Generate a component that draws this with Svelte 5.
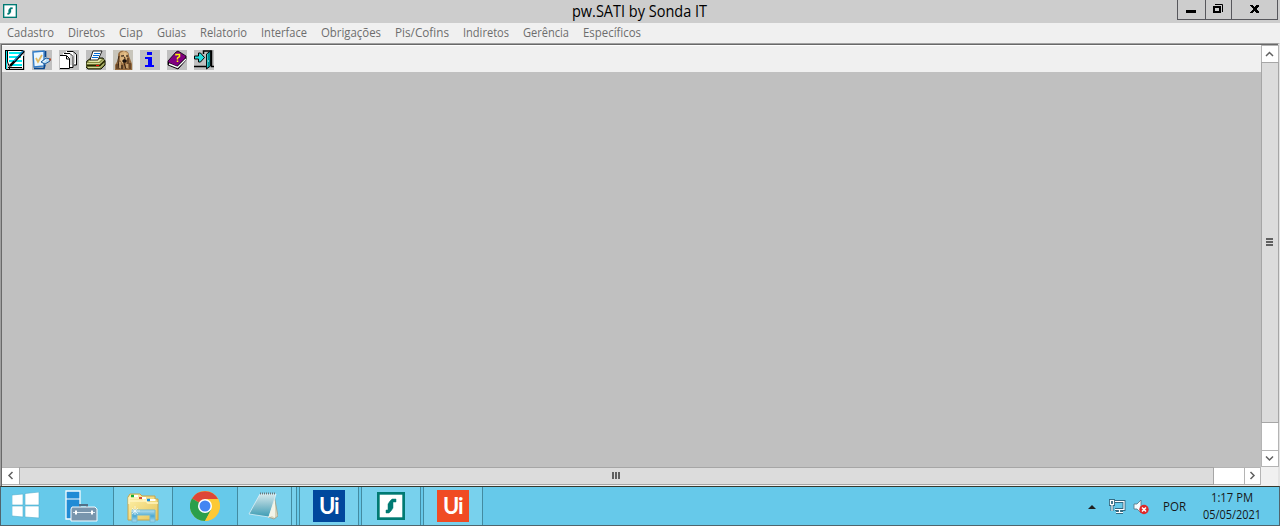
<script>
  const menu = [
    ['Cadastro', 47], ['Diretos', 37], ['Ciap', 24], ['Guias', 29], ['Relatorio', 47], ['Interface', 46],
    ['Obrigações', 60], ['Pis/Cofins', 54], ['Indiretos', 46], ['Gerência', 46], ['Específicos', 58]
  ];
</script>

{#snippet label(text, width, size, color)}
  <svg class="label" {width} height="20"><text x="0" y="14" font-size={size} fill={color} textLength={width} lengthAdjust="spacingAndGlyphs">{text}</text></svg>
{/snippet}

{#snippet sonda(size)}
  <svg width={size} height={size} viewBox="0 0 28 28">
    <rect width="28" height="28" fill="#007a73" /><rect x="2.700" y="2.700" width="22.600" height="22.600" fill="#fff" />
    <path d="M19 7v3h-3v6l-2 3-2 2H9v-3h2v-6l2-3 2-2z" fill="#007a73" stroke="#007a73" stroke-width=".5" />
  </svg>
{/snippet}

<div class="screen">
  <header>
    <div class="appicon">{@render sonda(14)}</div>
    <div class="title">{@render label('pw.SATI by Sonda IT', 135, 16, '#000')}</div>
    <div class="controls">
      <span class="min"><svg width="27" height="19"><path d="M8 10h10v3H8z" /></svg></span>
      <span class="max"><svg width="25" height="19" fill="none" stroke="#000"><path d="M9 4.500h7.500V12" stroke-width="1" /><path d="M8 7h6v5H8z" stroke-width="2" /></svg></span>
      <span class="close"><svg width="45" height="19" shape-rendering="crispEdges"><path d="M18 5h3l1.500 2L24 5h3v1l-3 3 3 3v1h-3l-1.500-2-1.500 2h-3v-1l3-3-3-3z" /></svg></span>
    </div>
  </header>
  <nav>{#each menu as [name, width]}{@render label(name, width, 12, '#6d6d6d')}{/each}</nav>
  <main>
    <section>
      <div class="tools">
        <svg viewBox="0 0 20 20"><path fill="#c0c0c0" d="M0 0h20v20H0z" /><path fill="#fff" d="M2 1h16v17H3z" /><path stroke="#00eaf2" stroke-width="2" d="M4 3h13M4 7h12M4 11h13M5 15h12" /><path d="M.500 0v19" stroke="#000" /><path d="M1.500 1v18" stroke="#00e0e8" /><path fill="none" stroke="#000" d="M2.500 1v11l2 5v2M0 .500h18M18.500 6v13" /><path d="M3 17.500h14M1 19.500h18" stroke="#000" /><path stroke="#000" stroke-width="2.500" d="M19 1 9 12l-4 4" /><path stroke="#1685c9" stroke-width="1.200" d="M18 1 9 11" /></svg>
        <svg viewBox="0 0 20 20"><path fill="#c0c0c0" d="M0 0h20v20H0z" /><path d="m1 2 11-1v15L2 17z" fill="#eaf7ff" stroke="#2f7cca" stroke-width="1.300" /><path d="M2 18.500h10l1-4M13.500 1v6" fill="none" stroke="#07458d" stroke-width="1.700" /><path d="m4 8 2 4 4-7" fill="none" stroke="#e1b962" stroke-width="1.700" /><path d="m9 12 5-4 4 1v2l-5 3z" fill="#b7dcf4" stroke="#1b5c9e" /><path d="m11 12 3-2" stroke="#fff" /><path d="M17 9.500h2" stroke="#b34b28" stroke-width="2" /></svg>
        <svg viewBox="0 0 20 20"><path fill="#c0c0c0" d="M0 0h20v20H0z" /><g fill="#fff"><path d="M7 1h7l3 3v11H7z" /><path d="M4 3h7l3 3v11H4z" /><path d="M1 5h7l3 3v11H1z" /></g><g fill="none" stroke="#000"><path d="M8 1.500h6l3.500 3V15H15" /><path d="M5 3.500h6l3 3v11h-3" /><path d="M1 5.500h6.500l3 3v10H1" /><path d="M7.500 6v3h3" /></g><path d="M12 5v10M15 3v10" stroke="#aaa" /></svg>
        <svg viewBox="0 0 20 20"><path fill="#c0c0c0" d="M0 0h20v20H0z" /><path d="m1 11 4-3h12l2 3v4l-4 4H2l-2-2v-4z" fill="#858a40" stroke="#151809" /><path d="m2 12 4-3h10l-3 3z" fill="#e0e5a5" /><path d="m7 1 9 0-4 9H4z" fill="#fff" stroke="#111" stroke-width=".9" /><path d="M8 3.500h6M7 5.500h6M6 7.500h6" stroke="#006ad5" /><path d="M1 13.500h13l4-4M2 17.500h12l4-4" fill="none" stroke="#d4d99a" /><path d="M1 15.500h13l5-5" fill="none" stroke="#242600" stroke-width="1.300" /><path d="M10 15.500h3" stroke="#f00" /></svg>
        <svg viewBox="0 0 20 20"><path fill="#c8c5bb" d="M0 0h20v20H0z" /><path d="M5 5c0-3 3-5 6-4 4 0 5 2 5 5l3 8v6H2v-5l3-5z" fill="#976d41" /><path d="m7 3 4-2 4 2-1 6-4 5-3-4z" fill="#d9b27b" /><path d="M6 6 5 10l1 9M10 5l2 3-1 5 2 6M15 8v6M4 14v5M17 13v6" fill="none" stroke="#3a2413" /><path d="M8 6h2M13 6h2M10 10h3v2h-3zM9 15v4" stroke="#100b08" fill="#2c1a10" /><path d="M7 12v6M14 14v4M12 3v4" stroke="#f0d09a" /></svg>
        <svg viewBox="0 0 20 20"><path fill="#c0c0c0" d="M0 0h20v20H0z" /><path d="M7 2h5v3H7zM5 7h7v8h2v2H5v-2h3V9H5z" fill="#00f" /></svg>
        <svg viewBox="0 0 20 20"><path fill="#c0c0c0" d="M0 0h20v20H0z" /><path d="m1 11 8-9 2-1 8 5v4l-8 9-10-4z" fill="#800080" stroke="#000" stroke-width=".8" /><path d="m1 12 9 4 9-9v3l-8 9-10-4z" fill="#000" /><path d="m2 14 8.500 3.500L19 9" fill="none" stroke="#fff" stroke-width="1.400" /><path d="M9 5.500V4.500h3.500v2L10.500 8v1.500m0 1v1.500" fill="none" stroke="#ff0" stroke-width="1.500" /></svg>
        <svg viewBox="0 0 20 20"><path fill="#c0c0c0" d="M0 0h20v20H0z" /><path d="M9.500 4V1h8v15.500H20M0 16.500h12" fill="none" stroke="#000" stroke-width="1.500" /><path d="m12.500 4 4-3v15l-4 3z" fill="#008d91" stroke="#000" stroke-width=".9" /><path d="M13.500 4v13" stroke="#4dd" stroke-width=".7" /><path d="M.500 6h4V3h2l4 4.500-4 4.500h-2V9h-4z" fill="#26dede" stroke="#000" /><path d="M14 11h1" stroke="#fff" /></svg>
      </div>
      <div class="canvas"></div>
    </section>
    <aside>
      <div class="up"><svg viewBox="0 0 16 15"><path d="m4 10 3.500-3.500L11 10" /></svg></div>
      <div class="vthumb"><i></i><i></i><i></i></div>
      <div class="vtrack"></div>
      <div class="down"><svg viewBox="0 0 16 15"><path d="m4 5.500 3.500 3.500L11 5.500" /></svg></div>
    </aside>
    <div class="horizontal">
      <div class="left"><svg viewBox="0 0 16 15"><path d="M10.500 4 7 7.500l3.500 3.500" /></svg></div>
      <div class="hthumb"><i></i><i></i><i></i></div>
      <div class="htrack"></div>
      <div class="right"><svg viewBox="0 0 16 15"><path d="M5.500 4 9 7.500 5.500 11" /></svg></div>
    </div>
    <div class="corner"></div>
  </main>
  <footer>
    <div class="start"><svg width="28" height="27"><path d="m0 3 11-1v11H0zM13 1.500 27 0v13H13zM0 14h11v11L0 24zM13 14h14v12l-14-1z" fill="#fff" stroke="#51afcc" stroke-width=".6" /></svg></div>
    <div class="server"><svg width="33" height="33"><path d="M1 1h14v28H1z" fill="#218bd5" stroke="#f4fcff" stroke-width="1.300" /><path d="M1 9h14" stroke="#fff" /><path d="M15 17v-2h7v2" fill="none" stroke="#526f87" stroke-width="2" /><path d="M7 17h23l2 2v12H6V19z" fill="#7895ad" stroke="#f5fcff" /><path d="M8 22.500h22" stroke="#dfebf3" /><path d="M11 20.500v4M27 20.500v4" stroke="#fff" stroke-width="2" /></svg></div>
    <div class="task folder"><svg width="34" height="33"><defs><linearGradient id="folder" x2="1" y2="1"><stop stop-color="#fff3ac" /><stop offset="1" stop-color="#e6c55b" /></linearGradient><linearGradient id="stand" x2="0" y2="1"><stop stop-color="#b8e3f1" /><stop offset=".5" stop-color="#4ba8d2" /><stop offset="1" stop-color="#b0dff0" /></linearGradient></defs><path d="M1 27V4l2-3h10l2 2h13v3h3v21z" fill="url(#folder)" stroke="#c9a448" /><path d="M2 9V5h13l2 2h12M2 11V8h17l2 2h10" fill="none" stroke="#fff5c0" stroke-width="1.500" /><path d="M4 3h3" stroke="#18ae34" stroke-width="2.500" /><path d="M12 5h3" stroke="#d64f35" stroke-width="2" /><path d="M20 7h3" stroke="#168ddf" stroke-width="2.500" /><path d="M7 3h4M15 5h4M23 7h5" stroke="#fff" stroke-width="2" /><path d="M5 29V17h23v12h-5v-7H10v7z" fill="url(#stand)" stroke="#70b9d5" /><path d="M8 13v9M4 18h9M5 15l6 6M11 15l-6 6" stroke="#fff" stroke-width=".6" /></svg></div>
    <div class="chrome"><svg width="30" height="30" viewBox="0 0 30 30"><circle cx="15" cy="15" r="15" fill="#fcc934" /><path d="M15 15 2 7.500A15 15 0 0 1 28 8H15z" fill="#dd4638" /><path d="M15 15 2 7.500A15 15 0 0 0 15 30l6-11z" fill="#2b9f4b" /><path d="M15 8h13A15 15 0 0 1 15 30l6-11z" fill="#fcc934" /><circle cx="15" cy="15" r="7" fill="#fff" /><circle cx="15" cy="15" r="5.500" fill="#4385f2" /></svg></div>
    <div class="task notepad"><svg width="30" height="32"><defs><linearGradient id="page" x2="0" y2="1"><stop stop-color="#d5e9ed" /><stop offset=".5" stop-color="#8ac1cf" /><stop offset="1" stop-color="#3b9cb4" /></linearGradient></defs><path d="m26 4 4 21-4 3-6-2z" fill="#d7d5bc" stroke="#9c967c" stroke-width=".7" /><path d="M12 3h16l-7 23-20-3z" fill="url(#page)" stroke="#edf7fa" stroke-width=".7" /><path d="M12 2.500h16" stroke="#68777b" stroke-width="2" stroke-dasharray="1 1" /><path d="m27 8-7 19 4-2 3 2z" fill="#f2f5e9" /></svg></div>
    <div class="stack"></div>
    <div class="task ui"><svg width="32" height="32"><path fill="#00489d" d="M0 0h32v32H0z" /><text x="6" y="24" textLength="20.500">Ui</text></svg></div>
    <div class="task s">{@render sonda(28)}</div>
    <div class="task orange"><svg width="32" height="32"><path fill="#f04b23" d="M0 0h32v32H0z" /><text x="6" y="24" textLength="20.500">Ui</text></svg></div>
    <div class="tray">
      <svg class="arrow" width="8" height="5"><path d="m0 4 4-4 4 4z" fill="#202020" /></svg>
      <svg class="network" width="17" height="16" fill="none"><path d="M6 2.500h9v8H6M10.500 11v2.500M7 13.500h7M1.500 1.500h3v4h-3zM3 6v6" stroke="#346a82" stroke-width="3" /><path d="M6 2.500h9v8H6M10.500 11v2.500M7 13.500h7M1.500 1.500h3v4h-3zM3 6v6" stroke="#fff" stroke-width="1.200" /></svg>
      <svg class="sound" width="17" height="16"><path d="M1 5h3l4-4v13l-4-4H1z" fill="#f5fcff" stroke="#57727f" stroke-width=".8" /><circle cx="11" cy="10.500" r="4.700" fill="#df2929" /><path d="m9 8.500 4 4m0-4-4 4" stroke="#fff" stroke-width="1.500" /></svg>
      <div class="lang">{@render label('POR', 23, 12, '#171717')}</div>
      <div class="clock">{@render label('1:17 PM', 42, 12, '#171717')}{@render label('05/05/2021', 58, 12, '#171717')}</div>
    </div>
  </footer>
</div>

<style>
  :global(body) { margin: 0; overflow: hidden; }
  * { box-sizing: border-box; }
  .screen { width: 1280px; height: 526px; background: #f0f0f0; font-family: "Open Sans", sans-serif; }
  svg { display: block; flex-shrink: 0; }
  .label { overflow: visible; }
  header { height: 23px; display: grid; grid-template-columns: 572px 1fr 103px; background: #cdcdcd; }
  .appicon { padding: 4px 0 0 3px; }
  .title { padding-top: 3px; }
  .controls { height: 20px; display: flex; border: 1px solid #57575c; border-top: 0; margin-right: 2px; }
  .controls span { height: 19px; border-right: 1px solid #57575c; }
  .min { width: 28px; } .max { width: 26px; } .controls .close { width: 45px; border: 0; }
  nav { height: 20px; display: flex; gap: 14px; padding-left: 7px; }
  main { height: 443px; display: grid; grid-template: 422px 18px / 1259px 18px; border-top: 1px solid #a0a0a0; border-left: 1px solid #a0a0a0; border-right: 2px solid #e3e3e3; box-shadow: inset 1px 1px #696969; padding: 1px 0 0 1px; background: #f0f0f0; }
  section { background: #c0c0c0; border-top: 1px solid #fff; }
  .tools { height: 26px; display: flex; gap: 7px; padding: 4px 0 0 3px; background: #f0f0f0; }
  .tools svg { width: 20px; height: 20px; }
  aside { display: flex; flex-direction: column; border: 1px solid #b4b4b4; background: #fff; }
  .up { height: 16px; } .down { height: 15px; }
  aside svg, .horizontal svg { width: 16px; height: 15px; fill: none; stroke: #606060; stroke-width: 1.500; }
  .vthumb { height: 361px; background: #dcdcdc; border: 1px solid #a6a6a6; margin: 0 -1px; padding: 0 1px 2px 0; display: flex; flex-direction: column; align-items: center; justify-content: center; gap: 1px; }
  .vthumb i { width: 7px; height: 2px; background: #606060; }
  .vtrack { flex: 1; border-bottom: 1px solid #b4b4b4; }
  .horizontal { display: flex; border: 1px solid #b4b4b4; border-left: 0; background: #fff; }
  .left { width: 17px; } .right { width: 16px; border-left: 1px solid #b4b4b4; }
  .hthumb { width: 1195px; margin: -1px 0; background: #dcdcdc; border: 1px solid #a6a6a6; padding: 0 1px 2px 0; display: flex; justify-content: center; align-items: center; gap: 1px; }
  .hthumb i { width: 2px; height: 7px; background: #606060; }
  .htrack { flex: 1; }
  footer { height: 40px; background: #66c9ea; border: 1px solid #50656d; border-top-color: #35372c; display: flex; }
  .start { width: 60px; padding: 5px 0 0 11px; } .server { width: 52px; padding: 3px 0 0 4px; }
  .task { background: #78d1ed; border-left: 1px solid #438ba1; border-right: 1px solid #438ba1; }
  .folder { width: 60px; padding: 6px 0 0 13px; } .chrome { width: 64px; padding: 4px 0 0 17px; }
  .notepad { width: 55px; padding: 4px 0 0 10px; }
  .stack { width: 5px; background: #78d1ed; border-right: 1px solid #438ba1; margin-right: 2px; }
  .ui { width: 60px; padding: 3px 0 0 13px; margin-right: 2px; }
  .s { width: 60px; padding: 5px 0 0 15px; margin-right: 2px; }
  .orange { width: 60px; padding: 3px 0 0 13px; }
  footer .ui text, footer .orange text { font: 700 22px Lato, sans-serif; fill: #fff; }
  .tray { display: flex; margin-left: auto; width: 190px; }
  .arrow { margin: 18px 1px 0 -1px; } .network { margin: 12px 0 0 12px; } .sound { margin: 12px 0 0 7px; }
  .lang { margin: 10px 0 0 13px; }
  .clock { width: 58px; margin: 1px 0 0 17px; display: flex; flex-direction: column; align-items: center; }
  .clock .label { height: 17px; }
</style>
